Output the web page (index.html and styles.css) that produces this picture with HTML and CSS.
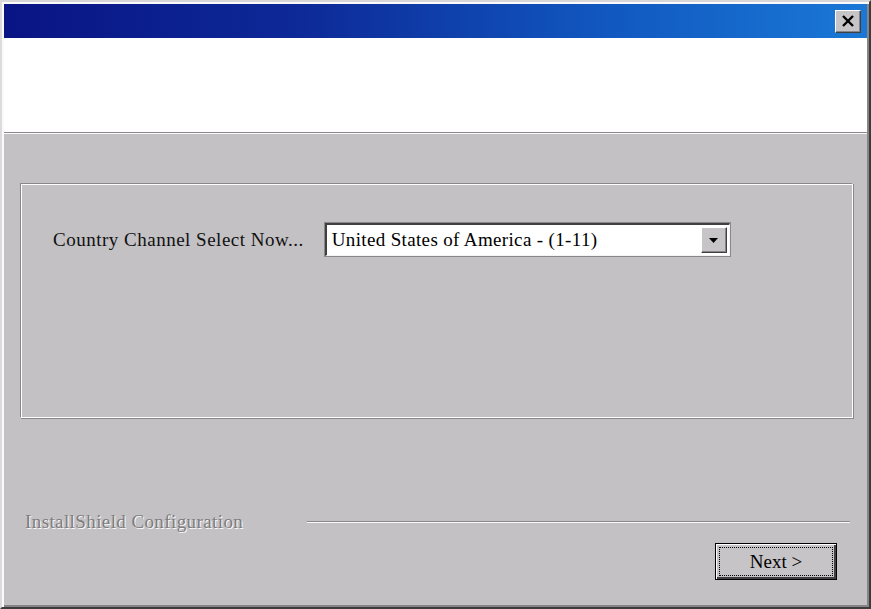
FILE: index.html
```html
<!DOCTYPE html>
<html lang="en">
<head>
  <meta charset="UTF-8">
  <title>InstallShield Configuration</title>
  <link rel="stylesheet" href="styles.css">
</head>
<body>
  <div class="window">
    <div class="titlebar">
      <div class="close">
        <svg width="14" height="12" viewBox="0 0 14 12">
          <path d="M2 1 L12 11 M12 1 L2 11" stroke="#000" stroke-width="2.4" fill="none"/>
        </svg>
      </div>
    </div>
    <div class="header"></div>

    <div class="body">
      <div class="group">
        <div class="row">
          <span class="label">Country Channel Select Now...</span>
          <div class="combo">
            <span class="combo-text">United States of America - (1-11)</span>
            <div class="combo-btn">
              <svg width="9" height="5" viewBox="0 0 9 5"><path d="M0 0 H9 L4.5 5 Z" fill="#000"/></svg>
            </div>
          </div>
        </div>
      </div>

      <div class="footer">
        <span class="brand">InstallShield Configuration</span>
        <div class="rule"></div>
      </div>

      <div class="buttons">
        <button class="btn"><span class="focus">Next &gt;</span></button>
      </div>
    </div>
  </div>
</body>
</html>
```

FILE: styles.css
```css
body {
  margin: 0;
  background: #c3c1c4;
  font-family: "Liberation Serif", "DejaVu Serif", serif;
}
.window {
  width: 871px;
  height: 609px;
  box-sizing: border-box;
  display: flex;
  flex-direction: column;
  background: #c3c1c4;
  border-top: 2px solid #d8d6d8;
  border-left: 2px solid #dcdadc;
  border-right: 2px solid #3c3c3c;
  border-bottom: 2px solid #3c3c3c;
  box-shadow: inset 2px 2px 0 #fafafa, inset -2px -2px 0 #868486;
}
.titlebar {
  margin: 2px 2px 0 2px;
  height: 34px;
  flex-shrink: 0;
  background: linear-gradient(to right, #0a1484 0%, #0d2a98 35%, #1158c0 70%, #1a78d6 100%);
  display: flex;
  justify-content: flex-end;
  align-items: center;
  padding-right: 6px;
}
.close {
  width: 26px;
  height: 23px;
  box-sizing: border-box;
  background: #c6c4c6;
  border-top: 1px solid #fff;
  border-left: 1px solid #fff;
  border-right: 1px solid #404040;
  border-bottom: 1px solid #404040;
  box-shadow: inset -1px -1px 0 #868486;
  display: flex;
  align-items: center;
  justify-content: center;
}
.header {
  margin: 0 2px 0 2px;
  height: 94px;
  flex-shrink: 0;
  background: #fff;
  border-bottom: 1px solid #8a888a;
  box-shadow: 0 1px 0 #fbfbfb;
}
.body {
  flex: 1;
  display: flex;
  flex-direction: column;
  padding: 50px 16px 0 18px;
}
.group {
  height: 235px;
  border-top: 1px solid #8a888a;
  border-left: 1px solid #8a888a;
  border-right: 1px solid #fff;
  border-bottom: 1px solid #fff;
  box-shadow: inset 1px 1px 0 #fff, 1px 1px 0 #8a888a;
  padding: 39px 0 0 32px;
  box-sizing: border-box;
}
.row {
  display: flex;
  align-items: center;
  gap: 21px;
}
.label {
  font-size: 19px;
  color: #111;
  letter-spacing: 0.5px;
}
.combo {
  width: 405px;
  height: 33px;
  box-sizing: border-box;
  background: #fff;
  border-top: 2px solid #404040;
  border-left: 2px solid #404040;
  border-right: 1px solid #f4f4f4;
  border-bottom: 1px solid #f4f4f4;
  box-shadow: 0 0 0 1px #8a888a;
  display: flex;
  align-items: center;
  justify-content: space-between;
  padding: 0 2px 0 5px;
}
.combo-text {
  font-size: 19px;
  color: #000;
  letter-spacing: 0.35px;
}
.combo-btn {
  width: 26px;
  height: 26px;
  box-sizing: border-box;
  background: #c6c4c6;
  border-top: 1px solid #fff;
  border-left: 1px solid #fff;
  border-right: 1px solid #404040;
  border-bottom: 1px solid #404040;
  box-shadow: inset -1px -1px 0 #868486;
  display: flex;
  align-items: center;
  justify-content: center;
}
.footer {
  margin-top: 93px;
  display: flex;
  align-items: center;
  gap: 64px;
  padding-left: 5px;
}
.brand {
  font-size: 19px;
  color: #7e7c7e;
  text-shadow: 1px 1px 0 #fafafa;
  letter-spacing: 0.4px;
}
.rule {
  flex: 1;
  height: 1px;
  background: #8a888a;
  border-bottom: 1px solid #fafafa;
  margin-right: 3px;
}
.buttons {
  display: flex;
  justify-content: flex-end;
  margin-top: 10px;
  padding-right: 16px;
}
.btn {
  width: 122px;
  height: 37px;
  padding: 3px;
  background: #c6c4c6;
  border: 1px solid #000;
  box-shadow: inset 1px 1px 0 #fff, inset -2px -2px 0 #404040;
  font-family: "Liberation Serif", serif;
  font-size: 19px;
  color: #000;
  display: flex;
}
.focus {
  flex: 1;
  border: 1px dotted #000;
  display: flex;
  align-items: center;
  justify-content: center;
}
```
